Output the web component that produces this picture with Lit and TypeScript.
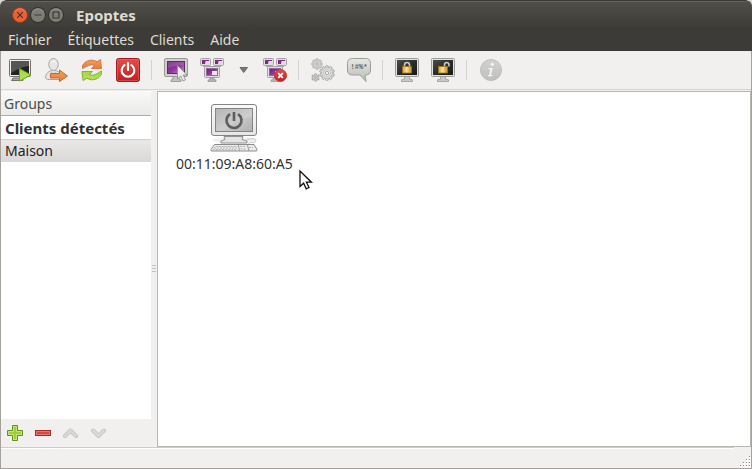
import { LitElement, html, svg, css, TemplateResult, SVGTemplateResult } from "lit";
import { customElement, property, state } from "lit/decorators.js";
import { classMap } from "lit/directives/class-map.js";

const purpleMonitor = (x: number, y: number, w: number, h: number) => svg`
  <rect x=${x + 0.5} y=${y + 0.5} width=${w - 1} height=${h - 1} rx="1" fill="#dededc" stroke="#a3a3a1"/>
  <rect x=${x + 2} y=${y + 2} width=${w - 4} height=${h - 4} fill="#7c2b88"/>
  <path d="M${x + w - 5.5} ${y + 3}H${x + w - 2}V${y + h - 2}H${x + w - 6}Z" fill="#ead3ee"/>`;

const wall = svg`
  ${purpleMonitor(0, 0, 11, 8)}
  ${purpleMonitor(13, 0, 11, 8)}
  <path d="M3 8h5v1H3zM16 8h5v1h-5z" fill="#aaa"/>
  <rect x="4.5" y="8.5" width="15" height="11" rx="1" fill="#dededc" stroke="#a3a3a1"/>
  <rect x="6.5" y="10.5" width="11" height="7" fill="url(#violet)" stroke="#8d6b92"/>
  <rect x="12" y="13" width="5" height="4" fill="#f3e8f5"/>
  <path d="M10 20h4v1.5l2 .5v1.5H8V22l2-.5z" fill="#b4b4b2" stroke="#8c8c8a" stroke-width=".6"/>`;

const darkMonitor = svg`
  <path d="M9.5 18.5h5v2.5l3 .8v1.7h-11v-1.7l3-.8z" fill="#c9c9c7" stroke="#90908e" stroke-width=".7"/>
  <rect x=".5" y=".5" width="23" height="18" rx="1" fill="#e2e2e0" stroke="#9c9c9a"/>
  <rect x="2" y="2" width="20" height="15" fill="url(#screen)"/>`;

const gearTeeth = (cx: number, cy: number, r: number, len: number, n: number) =>
  Array.from({ length: n }, (_, i) => svg`
    <rect x=${cx - len / 2} y=${cy - r - len * 0.7} width=${len} height=${len * 1.4} rx=".5"
      transform="rotate(${(i * 360) / n} ${cx} ${cy})" fill="#e0e0de" stroke="#a4a4a2" stroke-width=".9"/>`);

const gear = (cx: number, cy: number, r: number, len: number, n: number) => svg`
  ${gearTeeth(cx, cy, r, len, n)}
  <circle cx=${cx} cy=${cy} r=${r} fill="#dcdcda" stroke="#b0b0ae" stroke-width=".5"/>
  <circle cx=${cx} cy=${cy} r=${r * 0.62} fill="#e9e9e7" stroke="#b8b8b6" stroke-width=".7"/>
  <circle cx=${cx} cy=${cy} r=${r * 0.3} fill="#f4f4f2" stroke="#9a9a98" stroke-width=".8"/>`;

const icons: Record<string, SVGTemplateResult> = {
  boot: svg`
    <path d="M5 20h10v2.5H3.5z" fill="#a9aaa8" stroke="#70716f"/>
    <rect x="1.5" y="1.5" width="21" height="17" rx="1" fill="#eeeeec" stroke="#70716f"/>
    <rect x="3" y="3" width="18" height="14" fill="#222423"/>
    <path d="M3 3h18v5Q12 9 3 15z" fill="#545654"/>
    <path d="M11.5 10.5v12.5L23 17z" fill="url(#lime)" stroke="#6aa51c"/>`,
  logout: svg`
    <path d="M1.5 20c0-4 2.5-6.500 6-7.500h4c3.500 1 6 3.500 6 7.500l-2 1.500h-12z" fill="#e6e6e4" stroke="#a5a5a3"/>
    <path d="M7 13l2.5 2.5L12 13l-.5 4-2 2-2-2z" fill="#c5c5c3"/>
    <ellipse cx="9.5" cy="6.500" rx="4.700" ry="6" fill="#e6e6e4" stroke="#a5a5a3"/>
    <path d="M6.500 5c2-3 5-2 6 .5" stroke="#fff" fill="none"/>
    <path d="M6.500 15.500h9v-3.500l8 6-8 5.500V20h-9z" fill="url(#orange)" stroke="#c8642c"/>`,
  restart: svg`
    <path d="M2.500 7.500C5 2.500 12 .5 17 3.800L20.500 1.500 21.500 10.500H11.500L14.500 7.500C10.500 5.500 7 8.500 2.500 10.500z" fill="url(#orange)" stroke="#cf713e" stroke-width=".9"/>
    <path d="M21.500 16C19 21.500 12 23.500 7 20.200L3 22.500 2 13.500H12.500L9.500 16.500C13.500 18.500 17 15.500 21.500 13z" fill="url(#lime)" stroke="#7fa93a" stroke-width=".9"/>`,
  shutdown: svg`
    <rect x=".5" y=".5" width="23" height="23" rx="2" fill="url(#red)" stroke="#a61b1d"/>
    <rect x="1.500" y="1.500" width="21" height="21" rx="1" fill="none" stroke="#e86a66" opacity=".5"/>
    <path d="M8.500 7.200a6.300 6.300 0 1 0 7 0" fill="none" stroke="#fff" stroke-width="2.200" stroke-linecap="round"/>
    <path d="M12 5v7" stroke="#fff" stroke-width="2.200" stroke-linecap="round"/>`,
  assist: svg`
    <path d="M9 18h6v3l2 1v1.500H7V22l2-1z" fill="#c4c4c2" stroke="#8e8e8c" stroke-width=".8"/>
    <rect x=".5" y=".5" width="23" height="18" rx="1.500" fill="#cfcfcd" stroke="#9a9a98"/>
    <rect x="3.500" y="3.500" width="17" height="12" fill="url(#violet)" stroke="#5c2f63"/>
    <path d="M4 4h16v3Q11 7 4 10z" fill="#fff" opacity=".15"/>
    <path d="M13.500 7.500v13.500l3.200-3 2.300 5 2.500-1.200-2.300-4.800h4z" fill="#eeeeec" stroke="#8f8f8d" stroke-width=".9"/>`,
  broadcast: wall,
  stop: svg`${wall}
    <circle cx="17.500" cy="17.500" r="6" fill="url(#red)" stroke="#d43030"/>
    <path d="M15.200 15.200l4.600 4.600M19.800 15.200l-4.600 4.600" stroke="#fff" stroke-width="1.900"/>`,
  execute: svg`
    ${gear(6, 6, 3.7, 2.2, 8)}
    ${gear(16, 15, 5.5, 2.6, 10)}
    ${gear(4.5, 19.5, 2.3, 2, 6)}`,
  message: svg`
    <path d="M5.500.5h13q5 0 5 5v6.500q0 5-5 5H18l1 6.500-6-6.500H5.500q-5 0-5-5V5.500q0-5 5-5z" fill="url(#bubble)" stroke="#9b9d98"/>
    <text x="12" y="11" text-anchor="middle" font-family="Liberation Mono, monospace" font-weight="700" font-size="7" fill="#5d5f5b">!#%*</text>`,
  lock: svg`${darkMonitor}
    <path d="M9.500 9.500V7q0-2.500 2.500-2.500T14.500 7v2.500" fill="none" stroke="#c9c9c5" stroke-width="1.600"/>
    <rect x="7.500" y="8.500" width="9" height="6.500" fill="url(#gold)" stroke="#a47620" stroke-width=".8"/>`,
  unlock: svg`${darkMonitor}
    <path d="M13.500 9.500V7q0-2.500 2.200-2.500T18 7v1.500" fill="none" stroke="#c9c9c5" stroke-width="1.600"/>
    <rect x="7.500" y="8.500" width="9" height="6.500" fill="url(#gold)" stroke="#a47620" stroke-width=".8"/>`,
  info: svg`
    <circle cx="12" cy="12" r="10.500" fill="url(#disc)" stroke="#bdbdbb"/>
    <circle cx="13.300" cy="6.300" r="1.600" fill="#f5f5f4"/>
    <path d="M9.500 10h4.200l-1.700 7h1.700l-.4 1.300H8.800l.4-1.300h1l1.200-5.700H9.200z" fill="#f5f5f4"/>`,
  arrow: svg`<path d="M8 9.500h7.500L11.700 14.500z" fill="#787876" stroke="#6a6a68"/>`,
};

const defs = svg`
  <linearGradient id="violet" x2="1" y2="1"><stop stop-color="#6a1f75"/><stop offset=".55" stop-color="#93399f"/><stop offset="1" stop-color="#cf9ad6"/></linearGradient>
  <linearGradient id="screen" x2="1" y2="1"><stop stop-color="#4b4d4b"/><stop offset=".5" stop-color="#2b2d2c"/><stop offset="1" stop-color="#171918"/></linearGradient>
  <linearGradient id="lime" x2="0" y2="1"><stop stop-color="#a3d83e"/><stop offset="1" stop-color="#b6e356"/></linearGradient>
  <linearGradient id="orange" x2="0" y2="1"><stop stop-color="#f0a05c"/><stop offset="1" stop-color="#ee7a3a"/></linearGradient>
  <linearGradient id="red" x2="0" y2="1"><stop stop-color="#e0504c"/><stop offset="1" stop-color="#c21c1e"/></linearGradient>
  <linearGradient id="gold" x2="1" y2="0"><stop stop-color="#d99b32"/><stop offset=".45" stop-color="#fbe29a"/><stop offset="1" stop-color="#c98a26"/></linearGradient>
  <linearGradient id="bubble" x2="0" y2="1"><stop stop-color="#e6e8e3"/><stop offset="1" stop-color="#b9bcb5"/></linearGradient>
  <linearGradient id="disc" x2="0" y2="1"><stop stop-color="#d2d2d0"/><stop offset="1" stop-color="#bfbfbd"/></linearGradient>`;

type Tool = { icon: string; label: string; disabled?: boolean; narrow?: boolean };

const toolGroups: Tool[][] = [
  [
    { icon: "boot", label: "Démarrer" },
    { icon: "logout", label: "Déconnecter" },
    { icon: "restart", label: "Redémarrer" },
    { icon: "shutdown", label: "Éteindre" },
  ],
  [
    { icon: "assist", label: "Assister" },
    { icon: "broadcast", label: "Diffuser" },
    { icon: "arrow", label: "Options de diffusion", narrow: true },
    { icon: "stop", label: "Arrêter la diffusion" },
  ],
  [
    { icon: "execute", label: "Exécuter" },
    { icon: "message", label: "Message" },
  ],
  [
    { icon: "lock", label: "Verrouiller" },
    { icon: "unlock", label: "Déverrouiller" },
  ],
  [{ icon: "info", label: "Informations", disabled: true }],
];

@customElement("epoptes-titlebar")
class EpoptesTitlebar extends LitElement {
  static styles = css`
    :host { display: block; background: linear-gradient(#504f48, #3c3b37 28px); border-top: 1px solid #3a3936; box-shadow: inset 0 1px #66645c; border-radius: 6px 6px 0 0; color: #dfdbd2; }
    .title { display: flex; align-items: center; height: 27px; padding-left: 11px; }
    .ctl { display: grid; place-items: center; width: 18px; height: 18px; padding: 0; border: 0; background: none; }
    .ctl svg { width: 18px; height: 18px; }
    h1 { margin: 0 0 0 11px; font-size: 15px; line-height: 20px; font-weight: 700; }
    nav { display: flex; height: 23px; }
    nav button { padding: 0 8px; border: 0; background: none; color: inherit; font: inherit; line-height: 20px; }
  `;
  control(label: string, fill: string, rim: string, d: string): TemplateResult {
    return html`<button class="ctl" aria-label=${label}><svg viewBox="0 0 18 18">
      <circle cx="9" cy="9" r="7.500" fill=${fill} stroke=${rim}/>
      <path d="M3.500 6a6.500 6.500 0 0 1 11 0" fill="none" stroke="#fff" opacity=".2"/>
      <path d=${d} fill="none" stroke="#3a3936" stroke-width="1.200"/>
    </svg></button>`;
  }
  render() {
    return html`
      <div class="title">
        ${this.control("Fermer", "#ee5f34", "#8e3d24", "M6.200 6.200l5.600 5.600M11.800 6.200l-5.600 5.600")}
        ${this.control("Réduire", "#7e7c74", "#2f2e2b", "M5.500 9h7")}
        ${this.control("Agrandir", "#7e7c74", "#2f2e2b", "M6 6h6v6h-6z")}
        <h1>Epoptes</h1>
      </div>
      <nav>${["Fichier", "Étiquettes", "Clients", "Aide"].map((m) => html`<button>${m}</button>`)}</nav>`;
  }
}

@customElement("epoptes-toolbar")
class EpoptesToolbar extends LitElement {
  static styles = css`
    :host { display: block; border-bottom: 1px solid #d6d4d1; }
    .bar { display: flex; align-items: center; height: 38px; padding-left: 1px; }
    .defs { position: absolute; width: 0; height: 0; }
    .tool { display: grid; place-items: center; width: 36px; height: 36px; padding: 0; border: 0; background: none; }
    .narrow { width: 27px; }
    .tool svg { width: 24px; height: 24px; }
    .sep { width: 1px; height: 20px; margin: 0 6px 0 5px; background: #d3d1ce; }
  `;
  render() {
    return html`
      <svg class="defs" aria-hidden="true"><defs>${defs}</defs></svg>
      <div class="bar" role="toolbar">
        ${toolGroups.map((group, i) => html`
          ${i ? html`<span class="sep"></span>` : ""}
          ${group.map((t) => html`
            <button class=${classMap({ tool: true, narrow: !!t.narrow })} aria-label=${t.label} ?disabled=${t.disabled}>
              <svg viewBox="0 0 24 24">${icons[t.icon]}</svg>
            </button>`)}`)}
      </div>`;
  }
}

@customElement("epoptes-groups")
class EpoptesGroups extends LitElement {
  @state() selected = "Maison";
  static styles = css`
    :host { display: flex; flex-direction: column; width: 150px; padding-top: 1px; }
    button { border: 0; background: none; font: inherit; color: inherit; text-align: left; }
    .head { height: 25px; padding: 0 3px; line-height: 25px; color: #4c4c4c; background: linear-gradient(#f9f9f8, #eaeae8); border-bottom: 1px solid #adaba7; }
    .list { flex: 1; background: #fff; display: flex; flex-direction: column; }
    .row { height: 23px; padding: 0 4px; line-height: 22px; color: #333; }
    .all { font-size: 15px; font-weight: 700; }
    .on { background: linear-gradient(#e9e8e7, #dad8d6); border-top: 1px solid #d2d0ce; color: #222; }
    .actions { display: flex; height: 28px; padding-left: 1px; }
    .act { display: grid; place-items: center; width: 28px; height: 28px; padding: 0 2px 0 0; }
    .act svg { width: 16px; height: 16px; }
  `;
  action(label: string, shape: SVGTemplateResult, disabled = false) {
    return html`<button class="act" aria-label=${label} ?disabled=${disabled}><svg viewBox="0 0 16 16">${shape}</svg></button>`;
  }
  render() {
    return html`
      <button class="head">Groups</button>
      <div class="list">
        ${["Clients détectés", "Maison"].map((g, i) => html`
          <button class=${classMap({ row: true, all: i === 0, on: g === this.selected })} @click=${() => (this.selected = g)}>${g}</button>`)}
      </div>
      <div class="actions">
        ${this.action("Ajouter", svg`
          <path d="M5.500.5h5v5h5v5h-5v5h-5v-5h-5v-5h5z" fill="#a4cc35" stroke="#5f9424"/>
          <path d="M6.500 1.500h3v5h5v3h-5v5h-3v-5h-5v-3h5z" fill="none" stroke="#c8e37a"/>`)}
        ${this.action("Supprimer", svg`
          <rect x=".5" y="5.500" width="15" height="5" fill="#d7453f" stroke="#a52a2c"/>
          <rect x="1.500" y="6.500" width="13" height="3" fill="none" stroke="#e57570"/>`)}
        ${this.action("Monter", svg`
          <path d="M2 11L7.500 5.500l5.500 5.500" fill="none" stroke="#c6c2be" stroke-width="4" stroke-linecap="round" stroke-linejoin="round"/>
          <path d="M2 11L7.500 5.500l5.500 5.500" fill="none" stroke="#dad7d4" stroke-width="2.500" stroke-linecap="round" stroke-linejoin="round"/>`, true)}
        ${this.action("Descendre", svg`
          <path d="M2 5.500L7.500 11l5.500-5.500" fill="none" stroke="#c6c2be" stroke-width="4" stroke-linecap="round" stroke-linejoin="round"/>
          <path d="M2 5.500L7.500 11l5.500-5.500" fill="none" stroke="#dad7d4" stroke-width="2.500" stroke-linecap="round" stroke-linejoin="round"/>`, true)}
      </div>`;
  }
}

@customElement("epoptes-client")
class EpoptesClient extends LitElement {
  @property() name = "";
  static styles = css`
    :host { display: block; }
    button { display: flex; flex-direction: column; align-items: center; gap: 2px; padding: 0; border: 0; background: none; font: inherit; line-height: 20px; color: #333; }
    svg { width: 48px; height: 48px; }
  `;
  render() {
    return html`<button>
      <svg viewBox="0 0 48 48" aria-hidden="true">
        <defs>
          <linearGradient id="glass" x2="1" y2="1"><stop stop-color="#a9a9a9"/><stop offset=".6" stop-color="#c6c6c6"/><stop offset="1" stop-color="#b0b0b0"/></linearGradient>
          <linearGradient id="case" x2="0" y2="1"><stop stop-color="#fafafa"/><stop offset="1" stop-color="#e6e6e6"/></linearGradient>
        </defs>
        <ellipse cx="24" cy="36" rx="22" ry="3" fill="#efefef"/>
        <path d="M14 32.500h19l-1 3 5 1.500v2H11v-2l4-1.500z" fill="#e4e4e4" stroke="#929292"/>
        <path d="M37 35.500c7-2 11 0 8 2.500-2 1.500-6-1-7 3" fill="none" stroke="#c4c4c4"/>
        <rect x="1.500" y=".5" width="45" height="31" rx="2.500" fill="url(#case)" stroke="#858585"/>
        <rect x="5.500" y="4.500" width="37" height="23" fill="url(#glass)" stroke="#848484"/>
        <path d="M6 5h36v8Q28 14 20 22T6 26z" fill="#fff" opacity=".15"/>
        <path d="M20 10.200a7.500 7.500 0 1 0 8 0" fill="none" stroke="#5e5e5e" stroke-width="2.600"/>
        <path d="M24 8v9" stroke="#5e5e5e" stroke-width="2.600"/>
        <path d="M4.500 40.500H44l3 5q.5 1.500-1 1.500H2q-1.500 0-1-1.500z" fill="#ececec" stroke="#8b8b8b"/>
        <path d="M5.500 42.500h22M4 44h23M3 45.700h24M30 42.500h6M30.500 45h6M39 43.500h4" stroke="#b4b4b4" stroke-dasharray="2 1"/>
        <path d="M28.500 41l1 6M37.500 41l1.500 6" stroke="#9b9b9b"/>
      </svg>
      <span>${this.name}</span>
    </button>`;
  }
}

@customElement("app-root")
class AppRoot extends LitElement {
  static styles = css`
    :host { display: block; background: #d9d7d5; font: 14px/20px "Noto Sans", "Open Sans", sans-serif; color: #333; }
    .window { display: flex; flex-direction: column; box-sizing: border-box; min-height: 100vh; overflow: hidden; border-radius: 6px 6px 0 0; background: #f1f0ee; }
    .frame { flex: 1; display: flex; flex-direction: column; border: 1px solid #a5a29d; border-top: 0; }
    .body { flex: 1; display: flex; }
    .grip { display: flex; flex-direction: column; justify-content: center; align-items: center; gap: 2px; width: 6px; }
    .grip span { width: 4px; height: 1px; background: #c4c2be; }
    .view { flex: 1; position: relative; margin-top: 1px; padding: 12px 18px; border: 1px solid #b9b6b1; background: #fff; display: flex; align-items: flex-start; }
    .cursor { position: absolute; left: 140px; top: 77px; width: 16px; height: 22px; }
    footer { display: flex; justify-content: flex-end; align-items: flex-end; height: 21px; }
    .line { flex: 1; align-self: flex-start; height: 1px; background: #cfccc8; border-bottom: 1px solid #fff; }
    .resize { width: 17px; height: 12px; }
  `;
  render() {
    const dots = [[12, 0], [9, 3], [12, 3], [6, 6], [9, 6], [12, 6], [3, 9], [6, 9], [9, 9], [12, 9]];
    return html`
      <div class="window">
        <epoptes-titlebar></epoptes-titlebar>
        <div class="frame">
          <epoptes-toolbar></epoptes-toolbar>
          <main class="body">
            <epoptes-groups></epoptes-groups>
            <div class="grip"><span></span><span></span><span></span></div>
            <section class="view">
              <epoptes-client name="00:11:09:A8:60:A5"></epoptes-client>
              <svg class="cursor" viewBox="0 0 16 22" aria-hidden="true">
                <path d="M2 2v15.500l3.600-3.300 2.600 5.600 2.800-1.300-2.600-5.300h5z" fill="#fff" stroke="#111" stroke-width="1.300"/>
              </svg>
            </section>
          </main>
          <footer>
            <span class="line"></span>
            <svg class="resize" viewBox="0 0 17 12" aria-hidden="true">
              ${dots.map(([x, y]) => svg`<rect x=${x + 3} y=${y + 1} width="2" height="2" fill="#fff"/><rect x=${x + 3} y=${y} width="1" height="1" fill="#8d8a85"/>`)}
            </svg>
          </footer>
        </div>
      </div>`;
  }
}
